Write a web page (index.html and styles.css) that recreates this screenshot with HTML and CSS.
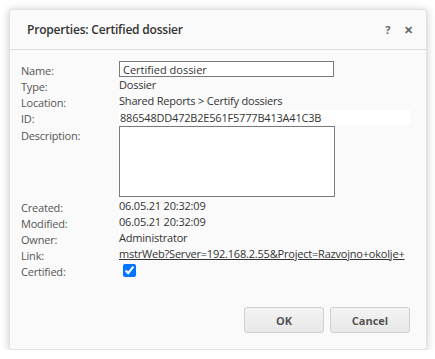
FILE: index.html
```html
<!DOCTYPE html>
<html lang="en">
<head>
    <title>Properties</title>
    <link rel="stylesheet" href="styles.css">
</head>
<body>
    <div class="dialog">
        <div class="dialog-header">
            <span class="dialog-title">Properties: Certified dossier</span>
            <span class="dialog-icons"><span class="help">?</span><span class="close">&#x2715;</span></span>
        </div>

        <div class="props">
            <div class="label">Name:</div>
            <div class="value"><input class="name-input" type="text" value="Certified dossier"></div>

            <div class="label">Type:</div>
            <div class="value">Dossier</div>

            <div class="label">Location:</div>
            <div class="value">Shared Reports &gt; Certify dossiers</div>

            <div class="label">ID:</div>
            <div class="value"><div class="id-box">886548DD472B2E561F5777B413A41C3B</div></div>

            <div class="label">Description:</div>
            <div class="value"><textarea class="desc"></textarea></div>

            <div class="label">Created:</div>
            <div class="value">06.05.21 20:32:09</div>

            <div class="label">Modified:</div>
            <div class="value">06.05.21 20:32:09</div>

            <div class="label">Owner:</div>
            <div class="value">Administrator</div>

            <div class="label">Link:</div>
            <div class="value link-cell"><a class="link" href="#">mstrWeb?Server=192.168.2.55&amp;Project=Razvojno+okolje+</a></div>

            <div class="label">Certified:</div>
            <div class="value"><input type="checkbox" checked></div>
        </div>

        <div class="buttons">
            <button>OK</button>
            <button>Cancel</button>
        </div>
    </div>
</body>
</html>
```

FILE: styles.css
```css
body {
    margin: 0;
    background: #fff;
    font-family: 'Open Sans', Arial, sans-serif;
    font-size: 11px;
    letter-spacing: -0.2px;
    color: #333;
}
.dialog {
    margin: 9px 0 0 9px;
    width: 418px;
    height: 341px;
    box-sizing: border-box;
    background: #fafafa;
    border: 1px solid #e2e2e2;
    border-radius: 3px;
    box-shadow: 0 1px 8px rgba(0,0,0,0.22);
    display: flex;
    flex-direction: column;
}
.dialog-header {
    height: 39px;
    border-bottom: 1px solid #dcdcdc;
    display: flex;
    align-items: center;
    justify-content: space-between;
    padding: 0 13px 0 17px;
}
.dialog-title {
    font-weight: 600;
    font-size: 12px;
    color: #333;
}
.dialog-icons {
    display: flex;
    gap: 14px;
    color: #666;
    font-weight: 700;
    font-size: 11px;
}
.props {
    display: grid;
    grid-template-columns: 98px 291px;
    grid-template-rows: 16px 16px 16px 17px 72px;
    grid-auto-rows: 16px;
    padding: 11px 0 0 11px;
}
.label {
    color: #555;
    line-height: 16px;
    padding-top: 2px;
}
.value {
    line-height: 15px;
    white-space: nowrap;
}
.name-input {
    box-sizing: border-box;
    width: 215px;
    height: 16px;
    margin: 0;
    padding: 0 3px;
    border: 1px solid #7a7a7a;
    font: inherit;
    color: #333;
    outline: none;
}
.id-box {
    background: #fff;
    margin-top: 1px;
    height: 15px;
    line-height: 15px;
    padding-left: 1px;
}
.desc {
    box-sizing: border-box;
    width: 216px;
    height: 71px;
    margin: 0;
    border: 1px solid #7a7a7a;
    resize: none;
    outline: none;
}
.link-cell {
    overflow: hidden;
    height: 18px;
}
.link {
    color: #333;
}
input[type="checkbox"] {
    margin: 2px 0 0 4px;
    width: 13px;
    height: 13px;
}
.buttons {
    margin-top: auto;
    display: flex;
    justify-content: flex-end;
    gap: 6px;
    padding: 0 16px 16px 0;
}
button {
    width: 80px;
    height: 26px;
    border: 1px solid #cfcfcf;
    border-radius: 3px;
    background: linear-gradient(#f4f4f4, #e8e8e8);
    font-family: 'Open Sans', Arial, sans-serif;
    font-weight: 700;
    font-size: 11px;
    color: #555;
}
```
